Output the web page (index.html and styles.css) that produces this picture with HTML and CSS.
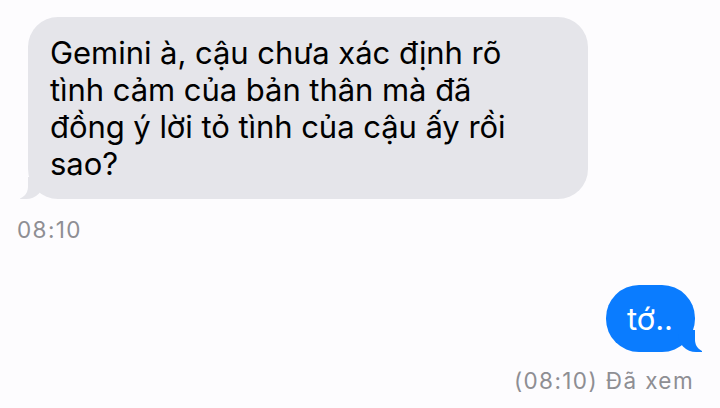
FILE: index.html
```html
<!DOCTYPE html>
<html lang="vi">
<head>
<meta charset="utf-8">
<link rel="stylesheet" href="styles.css">
</head>
<body>
<div class="chat">
  <div class="row them">
    <div class="bubble gray">
      <span class="line">Gemini à, cậu chưa xác định rõ</span>
      <span class="line">tình cảm của bản thân mà đã</span>
      <span class="line">đồng ý lời tỏ tình của cậu ấy rồi</span>
      <span class="line">sao?</span>
    </div>
  </div>
  <div class="time time-left">08:10</div>
  <div class="row me">
    <div class="bubble blue">tớ..</div>
  </div>
  <div class="time time-right">(08:10) Đã xem</div>
</div>
</body>
</html>
```
FILE: styles.css
```css
html, body {
  margin: 0;
  padding: 0;
  background: #fdfcfe;
}
body {
  width: 720px;
  height: 408px;
  overflow: hidden;
  font-family: Inter, "Noto Sans", sans-serif;
}
.chat {
  display: flex;
  flex-direction: column;
  padding-top: 17px;
}
.row {
  display: flex;
}
.row.me {
  justify-content: flex-end;
  padding-right: 25px;
  margin-top: 42px;
}
.row.them {
  padding-left: 28px;
}
.bubble {
  position: relative;
  font-size: 31px;
  line-height: 37px;
  letter-spacing: -0.05px;
}
.line {
  display: block;
  white-space: nowrap;
}
.gray {
  width: 560px;
  box-sizing: border-box;
  background: #e5e5ea;
  color: #000;
  border-radius: 30px;
  padding: 17px 22px 17px 22px;
}
.gray::before {
  content: "";
  position: absolute;
  bottom: 0;
  left: -8px;
  width: 24px;
  height: 22px;
  background: #e5e5ea;
  border-bottom-right-radius: 18px;
}
.gray::after {
  content: "";
  position: absolute;
  bottom: 0;
  left: -14px;
  width: 14px;
  height: 24px;
  background: #fdfcfe;
  border-bottom-right-radius: 12px;
}
.blue {
  background: #0a7cff;
  color: #fff;
  border-radius: 33px;
  padding: 15px 22px 15px 21px;
}
.blue::before {
  content: "";
  position: absolute;
  bottom: 0;
  right: -7px;
  width: 24px;
  height: 22px;
  background: #0a7cff;
  border-bottom-left-radius: 18px;
}
.blue::after {
  content: "";
  position: absolute;
  bottom: 0;
  right: -13px;
  width: 13px;
  height: 24px;
  background: #fdfcfe;
  border-bottom-left-radius: 12px;
}
.time {
  color: #8e8e93;
  font-size: 22.5px;
  line-height: 27px;
  letter-spacing: 1.4px;
}
.time-left {
  padding-left: 17px;
  margin-top: 17px;
}
.time-right {
  align-self: flex-end;
  padding-right: 26px;
  margin-top: 15px;
}
```
